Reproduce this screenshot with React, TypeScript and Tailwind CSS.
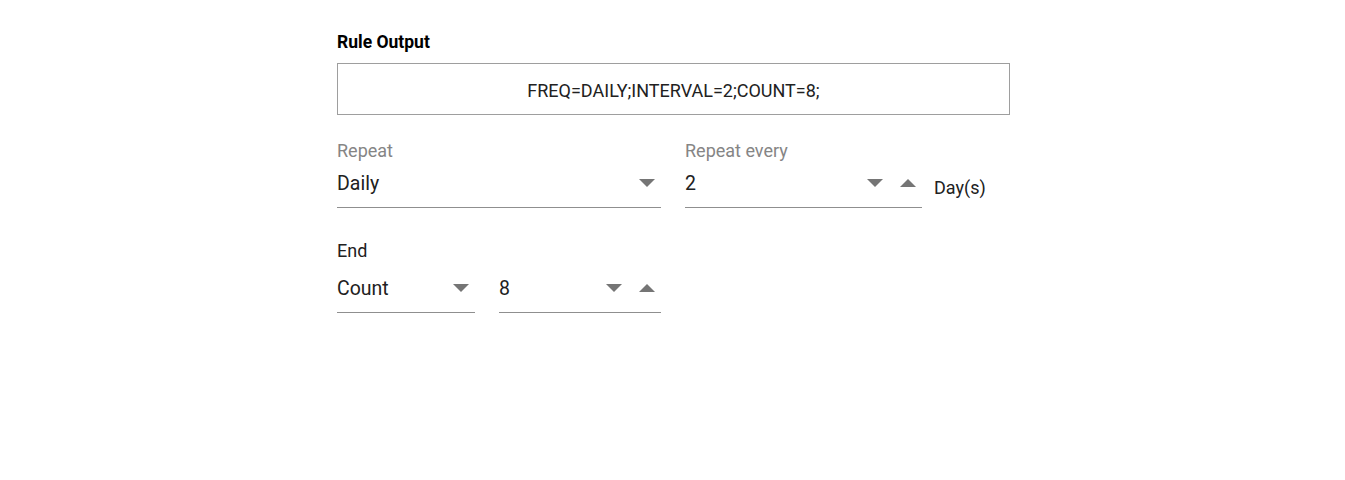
import React from "react";

const font = { fontFamily: "Roboto, 'Liberation Sans', sans-serif" };

function Down() {
  return (
    <svg width="16" height="8" viewBox="0 0 16 8" className="shrink-0">
      <polygon points="0,0 16,0 8,8" fill="#757575" />
    </svg>
  );
}

function Up() {
  return (
    <svg width="16" height="8" viewBox="0 0 16 8" className="shrink-0">
      <polygon points="0,8 16,8 8,0" fill="#757575" />
    </svg>
  );
}

// underline select
function Select({ value, box }: { value: string; box: string }) {
  return (
    <div className={`${box} border-b border-[#8f8f8f] pr-[6px]`}>
      <div className="flex h-6 items-center justify-between">
        <span className="pt-[2px] text-[19.5px] leading-6 text-[#212121]">{value}</span>
        <Down />
      </div>
    </div>
  );
}

// number spinner
function Spinner({ value, box }: { value: string; box: string }) {
  return (
    <div className={`${box} border-b border-[#8f8f8f] pr-[6px]`}>
      <div className="flex h-6 items-center">
        <span className="flex-1 pt-[2px] text-[19.5px] leading-6 text-[#212121]">{value}</span>
        <div className="flex items-center gap-[17px]">
          <Down />
          <Up />
        </div>
      </div>
    </div>
  );
}

export default function App() {
  return (
    <div className="min-h-[480px] bg-white" style={font}>
      <div className="ml-[337px] w-[673px] pt-[30px]">
        <div className="text-[17.5px] font-bold leading-6 text-black">Rule Output</div>
        <div className="mt-[9px] flex h-[52px] items-center justify-center border border-[#9e9e9e] pt-[2px] text-[18px] text-[#212121]">
          FREQ=DAILY;INTERVAL=2;COUNT=8;
        </div>

        {/* repeat row */}
        <div className="mt-[25px] flex gap-6">
          <div className="flex flex-col">
            <span className="text-[18px] leading-[22px] text-[#858585]">Repeat</span>
            <Select value="Daily" box="w-[324px] h-[46px] pt-[9px]" />
          </div>
          <div className="flex items-end">
            <div className="flex flex-col">
              <span className="text-[18px] leading-[22px] text-[#858585]">Repeat every</span>
              <Spinner value="2" box="w-[237px] h-[46px] pt-[9px]" />
            </div>
            <span className="ml-3 pb-[8px] text-[18px] leading-6 text-[#212121]">Day(s)</span>
          </div>
        </div>

        {/* end row */}
        <div className="mt-[31px] flex flex-col">
          <span className="text-[18px] leading-6 text-[#212121]">End</span>
          <div className="flex gap-6">
            <Select value="Count" box="w-[138px] h-[50px] pt-[13px]" />
            <Spinner value="8" box="w-[162px] h-[50px] pt-[13px]" />
          </div>
        </div>
      </div>
    </div>
  );
}
